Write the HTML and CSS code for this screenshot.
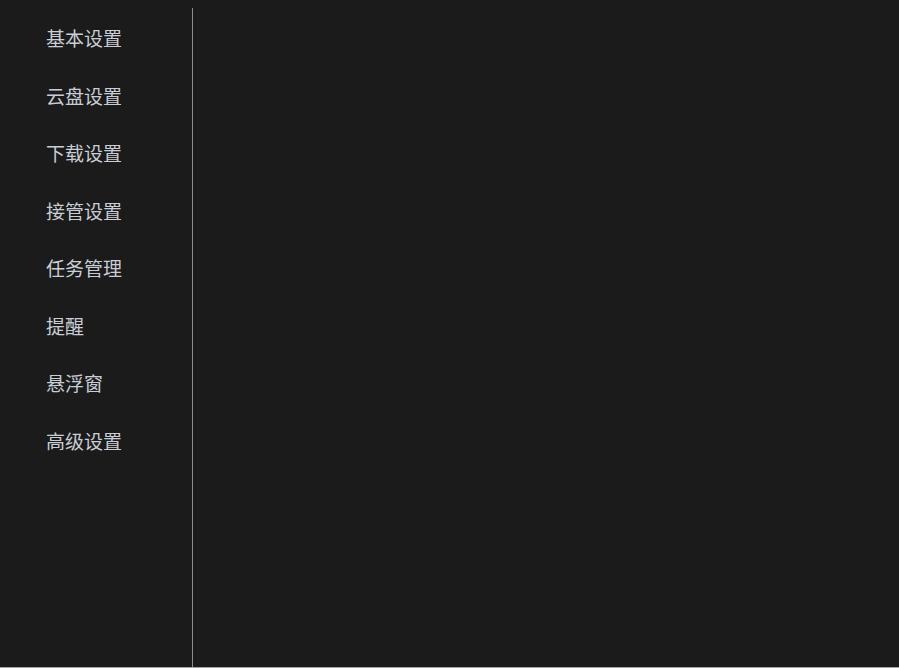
FILE: index.html
```html
<!DOCTYPE html>
<html lang="zh-CN">
<head>
<meta charset="utf-8">
<title>设置</title>
<link rel="stylesheet" href="styles.css">
</head>
<body>
<div class="app">
  <div class="layout">
    <nav class="sidebar">
      <ul class="menu">
        <li class="menu-item">基本设置</li>
        <li class="menu-item">云盘设置</li>
        <li class="menu-item">下载设置</li>
        <li class="menu-item">接管设置</li>
        <li class="menu-item">任务管理</li>
        <li class="menu-item">提醒</li>
        <li class="menu-item">悬浮窗</li>
        <li class="menu-item">高级设置</li>
      </ul>
    </nav>
    <main class="content"></main>
  </div>
  <div class="bottom-rule"></div>
</div>
</body>
</html>
```
FILE: styles.css
```css
html, body {
  height: 100%;
  margin: 0;
  padding: 0;
  background: #1b1b1b;
  overflow: hidden;
}
body {
  font-family: "Noto Sans CJK SC", "Noto Sans", sans-serif;
  color: #c9cdd5;
}
.app {
  height: 100%;
  display: flex;
  flex-direction: column;
  box-sizing: border-box;
  padding-top: 8px;
}
.layout {
  flex: 1;
  display: flex;
  min-height: 0;
}
.sidebar {
  width: 193px;
  box-sizing: border-box;
  border-right: 1px solid #8b8b98;
  padding-left: 8px;
}
.menu {
  list-style: none;
  margin: 0;
  padding: 1px 0 0 38px;
}
.menu-item {
  height: 57.5px;
  line-height: 57.5px;
  font-size: 19px;
  white-space: nowrap;
}
.content {
  flex: 1;
}
.bottom-rule {
  height: 1px;
  background: #a3a3a3;
}
```
